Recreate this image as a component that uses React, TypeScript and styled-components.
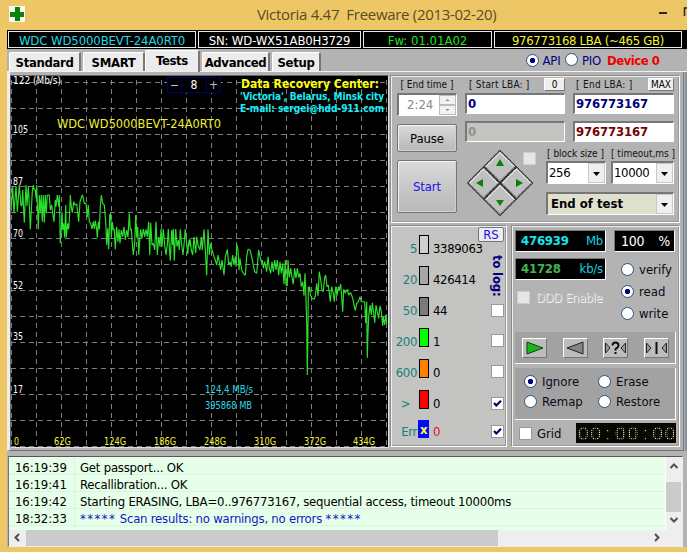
import React from "react";
import styled, { createGlobalStyle, css } from "styled-components";

const Global = createGlobalStyle`
  * { box-sizing: border-box; }
  body { margin: 0; background: #edc766; overflow: hidden; }
`;

const FONT = `"DejaVu Sans Condensed", "DejaVu Sans", sans-serif`;

const Window = styled.div`
  width: 687px;
  height: 552px;
  display: flex;
  flex-direction: column;
  background: #edc766;
  font-family: ${FONT};
  font-size: 13px;
  color: #000;
  white-space: pre;
  overflow: hidden;
`;

const TitleBar = styled.header`
  height: 30px;
  flex: none;
  display: flex;
  align-items: center;
  padding-left: 9px;
`;
const CrossIcon = styled.svg`
  width: 16px;
  height: 16px;
  margin-top: -2px;
`;
const Title = styled.h1`
  margin: -2px 0 0 232px;
  width: 403px;
  font: 400 15px/30px "Open Sans", sans-serif;
  letter-spacing: -0.3px;
  color: #5b4b22;
`;
const Controls = styled.svg`
  width: 28px;
  height: 30px;
  flex: none;
`;

const Body = styled.main`
  flex: none;
  height: 517px;
  margin-left: 7px;
  background: #b3b3b3;
  display: flex;
  flex-direction: column;
`;

const InfoBar = styled.div`
  height: 19px;
  flex: none;
  background: #000;
  display: flex;
  gap: 2px;
  padding: 1px 0 1px 1px;
`;
const InfoCell = styled.div<{ $w: number; $c: string; $ls?: number }>`
  width: ${(p) => p.$w}px;
  height: 17px;
  border: 1px solid #e8e8e8;
  color: ${(p) => p.$c};
  text-align: center;
  font-size: 13px;
  line-height: 17px;
  letter-spacing: ${(p) => p.$ls ?? 0}px;
`;

const TabRow = styled.nav`
  height: 23px;
  flex: none;
  display: flex;
  align-items: flex-end;
  border-bottom: 1px solid #f2f2f2;
  padding-left: 2px;
`;
const Tab = styled.div<{ $w: number; $active?: boolean; $gap?: number }>`
  width: ${(p) => p.$w}px;
  height: ${(p) => (p.$active ? 22 : 19)}px;
  margin-right: ${(p) => p.$gap ?? 2}px;
  margin-bottom: ${(p) => (p.$active ? -1 : 0)}px;
  background: #ececec;
  border: 1px solid #fff;
  border-right: 2px solid #777;
  border-bottom: 0;
  border-radius: 2px 2px 0 0;
  font-weight: bold;
  font-size: 13px;
  line-height: 19px;
  text-align: center;
  letter-spacing: -0.35px;
`;
const Mode = styled.div`
  display: flex;
  align-items: center;
  height: 22px;
  margin-left: auto;
  width: 161px;
  color: #000080;
  font-size: 13px;
  letter-spacing: -0.2px;
`;
const Device = styled.b`
  color: #f00000;
  margin-left: 6px;
  letter-spacing: -0.5px;
`;
const Dot = styled.span<{ $on?: boolean }>`
  flex: none;
  width: 13px;
  height: 13px;
  border-radius: 50%;
  border: 1px solid #27557f;
  background: ${(p) => (p.$on ? "radial-gradient(circle, #000080 0 2.4px, #fff 3px)" : "#fff")};
`;

const Page = styled.section`
  height: 379px;
  flex: none;
  width: 677px;
  display: flex;
  padding-top: 3px;
  border-left: 3px solid #eee;
  border-right: 1px solid #777;
  border-bottom: 1px solid #707070;
  box-shadow: 1px 0 #b3b3b3, 3px 0 #8292a2;
`;
const ChartBox = styled.div`
  width: 379px;
  height: 373px;
  border: 1px solid #666;
  border-right-color: #ddd;
  border-bottom-color: #ddd;
  background: #000;
  position: relative;
  svg { display: block; }
`;
const Spinner = styled.div`
  position: absolute;
  left: 156px;
  top: 1px;
  height: 16px;
  display: flex;
  background: #000;
  border: 1px solid #00006c;
  color: #fff;
  font-size: 12px;
  line-height: 15px;
  text-align: center;
`;
const SpinCell = styled.span<{ $w: number; $c?: string }>`
  width: ${(p) => p.$w}px;
  color: ${(p) => p.$c ?? "#fff"};
  & + & { border-left: 1px solid #00006c; }
`;

const Side = styled.div`
  display: flex;
  flex-direction: column;
  gap: 2px;
  margin-left: 1px;
  width: 290px;
`;
const groove = css`
  border: 1px solid #8b8b8b;
  border-right-color: #fff;
  border-bottom-color: #fff;
  box-shadow: inset 1px 1px #eee, inset -1px -1px #999;
`;
const TopGroup = styled.div`
  ${groove}
  height: 148px;
  display: flex;
  padding: 3px 0 0 6px;
  gap: 8px;
`;
const ColA = styled.div`
  width: 60px;
  display: flex;
  flex-direction: column;
`;
const Caption = styled.div<{ $w?: number; $ls?: number }>`
  width: ${(p) => (p.$w ? p.$w + "px" : "auto")};
  height: 13px;
  font-size: 10px;
  line-height: 12px;
  color: #111;
  text-align: center;
  letter-spacing: ${(p) => p.$ls ?? 0}px;
`;
const sunken = css`
  border: 1px solid #777;
  border-width: 2px 1px 1px 2px;
  border-right-color: #fff;
  border-bottom-color: #fff;
  background: #fff;
`;
const TimeBox = styled.div`
  ${sunken}
  margin-top: 1px;
  height: 23px;
  display: flex;
  justify-content: space-between;
  padding-left: 8px;
  color: #8a8a8a;
  font-size: 13px;
  line-height: 20px;
`;
const Steps = styled.svg`
  width: 18px;
  height: 20px;
`;
const Push = styled.button<{ $h: number; $mt: number; $c?: string }>`
  height: ${(p) => p.$h}px;
  margin: ${(p) => p.$mt}px 0 0;
  padding: 0;
  border: 1px solid #747474;
  border-radius: 2px;
  box-shadow: inset 1px 1px #f4f4f4, inset -1px -1px #d0d0d0;
  background: linear-gradient(#dcdcdc, #c6c6c6 55%, #bababa);
  color: ${(p) => p.$c ?? "#000"};
  font: 13px ${FONT};
  letter-spacing: -0.1px;
`;
const ColB = styled.div`
  display: flex;
  flex-direction: column;
  width: 209px;
`;
const Row = styled.div<{ $gap?: number; $mt?: number }>`
  display: flex;
  gap: ${(p) => p.$gap ?? 0}px;
  margin-top: ${(p) => p.$mt ?? 0}px;
`;
const HeadCell = styled.div<{ $w: number; $pl: number }>`
  width: ${(p) => p.$w}px;
  padding-left: ${(p) => p.$pl}px;
  display: flex;
  justify-content: space-between;
`;
const Mini = styled.div<{ $w: number }>`
  width: ${(p) => p.$w}px;
  height: 13px;
  margin-top: -1px;
  background: #efefef;
  border: 1px solid #fff;
  border-right-color: #777;
  border-bottom-color: #777;
  font-size: 10px;
  line-height: 12px;
  text-align: center;
`;
const Field = styled.div<{ $w: number; $c: string; $off?: boolean }>`
  ${sunken}
  width: ${(p) => p.$w}px;
  height: 21px;
  padding-left: 1px;
  font-weight: 700;
  font-size: 13px;
  line-height: 18px;
  letter-spacing: -0.15px;
  color: ${(p) => p.$c};
  ${(p) => p.$off && "background: #c3c3bf;"}
`;
const PadArea = styled.div`
  width: 82px;
  display: flex;
  align-items: flex-start;
  padding: 1px 0 0 1px;
`;
const Pad = styled.svg`
  width: 68px;
  height: 68px;
  flex: none;
`;
const Check = styled.span<{ $dim?: boolean; $ml?: number; $mt?: number }>`
  flex: none;
  display: flex;
  width: 13px;
  height: 13px;
  margin-left: ${(p) => p.$ml ?? 0}px;
  margin-top: ${(p) => p.$mt ?? 0}px;
  border: 1px solid ${(p) => (p.$dim ? "#ccc" : "#999")};
  background: ${(p) => (p.$dim ? "#e6e6e6" : "#fff")};
  svg { width: 11px; height: 11px; }
`;
const Selects = styled.div`
  width: 128px;
  display: flex;
  flex-direction: column;
`;
const Select = styled.div<{ $w: number; $big?: boolean }>`
  ${sunken}
  width: ${(p) => p.$w}px;
  height: 23px;
  display: flex;
  justify-content: space-between;
  padding-left: ${(p) => (p.$big ? 3 : 1)}px;
  font-size: 13px;
  font-weight: ${(p) => (p.$big ? 700 : 400)};
  letter-spacing: ${(p) => (p.$big ? 0 : -0.35)}px;
  line-height: 20px;
  ${(p) => p.$big && "background: #dfe0cd;"}
`;
const Drop = styled.svg`
  width: 17px;
  height: 20px;
  flex: none;
`;

const Lower = styled.div`
  display: flex;
  gap: 4px;
`;
const Legend = styled.div`
  ${groove}
  width: 117px;
  height: 222px;
  background: #c3c3c1;
  display: flex;
  justify-content: space-between;
  padding: 9px 2px 0 1px;
`;
const LegendRows = styled.div`
  display: flex;
  flex-direction: column;
`;
const LegendRow = styled.div<{ $last?: boolean }>`
  display: grid;
  flex: none;
  grid-template-columns: 25px 10px auto;
  column-gap: 2px;
  height: ${(p) => (p.$last ? 26 : 31)}px;
  margin-top: ${(p) => (p.$last ? -1 : 0)}px;
  font-size: 13px;
  line-height: ${(p) => (p.$last ? 24 : 28)}px;
  letter-spacing: -0.35px;
`;
const Key = styled.span`
  text-align: right;
  color: #16807f;
`;
const Swatch = styled.span<{ $c: string }>`
  height: 19px;
  border: 1px solid #000;
  background: ${(p) => p.$c};
`;
const ErrMark = styled.b`
  height: 18px;
  margin: 0 0 0 -1px;
  background: #0008ff;
  color: #ffff30;
  font-size: 13px;
  line-height: 20px;
  text-align: center;
`;
const Count = styled.span<{ $c?: string }>`
  padding-left: 2px;
  color: ${(p) => p.$c ?? "#000"};
  width: 52px;
`;
const LogCol = styled.div`
  display: flex;
  flex-direction: column;
  align-items: flex-end;
  margin-top: -8px;
  margin-left: -12px;
  width: 26px;
`;
const RS = styled.div`
  width: 26px;
  height: 15px;
  flex: none;
  border: 1px solid #777;
  border-radius: 2px;
  background: #ececf2;
  color: #1414e0;
  font-size: 13px;
  line-height: 14px;
  text-align: center;
`;
const ToLog = styled.div`
  writing-mode: vertical-rl;
  flex: none;
  width: 14px;
  height: 49px;
  margin-top: 13px;
  font-weight: bold;
  font-size: 13px;
  line-height: 14px;
  letter-spacing: -0.2px;
  color: #000080;
`;

const Panel = styled.div`
  ${groove}
  width: 169px;
  height: 222px;
  display: flex;
  flex-direction: column;
  padding: 4px 0 0 3px;
`;
const Upper = styled.div`
  display: flex;
  gap: 8px;
  height: 102px;
`;
const Stack = styled.div`
  display: flex;
  flex-direction: column;
`;
const Led = styled.div<{ $w: number; $mt?: number; $c: string }>`
  width: ${(p) => p.$w}px;
  height: 22px;
  margin-top: ${(p) => p.$mt ?? 0}px;
  border: 1px solid #777;
  border-right-color: #fff;
  border-bottom-color: #fff;
  background: #000;
  color: ${(p) => p.$c};
  display: flex;
  justify-content: space-between;
  padding: 0 2px 0 5px;
  font-size: 13px;
  line-height: 20px;
  letter-spacing: -0.2px;
`;
const Unit = styled.span`
  color: #19d0e0;
`;
const Percent = styled(Led)`
  font-size: 14px;
  line-height: 21px;
  padding: 0 4px 0 6px;
`;
const Option = styled.label<{ $ml?: number; $mt?: number; $gap?: number }>`
  display: flex;
  align-items: center;
  gap: ${(p) => p.$gap ?? 5}px;
  height: 20px;
  margin-left: ${(p) => p.$ml ?? 0}px;
  margin-top: ${(p) => p.$mt ?? 0}px;
  font-size: 13px;
  color: #0a0a14;
`;
const Disabled = styled.span`
  color: #bcbcbc;
  text-shadow: 1px 1px #f2f2f2;
  letter-spacing: -0.45px;
`;
const Strip = styled.div<{ $h: number; $mt?: number }>`
  width: 161px;
  height: ${(p) => p.$h}px;
  margin-top: ${(p) => p.$mt ?? 0}px;
  background: #a2a2a3;
  border-right: 1px solid #fff;
  border-bottom: 1px solid #fff;
`;
const Transport = styled(Strip)`
  display: flex;
  padding: 6px 6px 0 7px;
  justify-content: space-between;
`;
const Key3D = styled.svg`
  width: 25px;
  height: 20px;
  border: 1px solid #fff;
  border-right-color: #777;
  border-bottom-color: #777;
  background: #bdbdbd;
`;
const Actions = styled(Strip)`
  display: grid;
  grid-template-columns: 74px auto;
  grid-template-rows: 20px 20px;
  padding: 3px 0 0 9px;
`;
const Bottom = styled.div`
  display: flex;
  justify-content: space-between;
  width: 161px;
  padding: 3px 0 0 4px;
`;
const Timer = styled.div`
  width: 100px;
  height: 20px;
  display: flex;
  background-color: #0b0d04;
  color: #d5dfb4;
  font: 19px/21px "Liberation Sans", sans-serif;
  padding-left: 1px;
  position: relative;
  &::after {
    content: "";
    position: absolute;
    inset: 0;
    background:
      repeating-linear-gradient(90deg, rgba(4, 5, 0, 0.75) 0 1px, transparent 1px 2px),
      repeating-linear-gradient(rgba(4, 5, 0, 0.75) 0 1px, transparent 1px 2px);
  }
`;
const TimerCell = styled.span`
  flex: 1;
  text-align: center;
`;

const Log = styled.section`
  width: 675px;
  height: 91px;
  flex: none;
  margin: 5px 0 0 1px;
  border: 1px solid #eee;
  border-top: 1px solid #555;
  border-left: 1px solid #777;
  background: #eee;
  display: grid;
  grid-template-columns: 657px 16px;
  grid-template-rows: 73px 16px;
`;
const Lines = styled.div`
  background: #e6ffe9;
  border-right: 1px solid #fff;
  padding-top: 1px;
`;
const Line = styled.div<{ $c?: string }>`
  display: grid;
  grid-template-columns: 66px auto;
  height: 17px;
  border-bottom: 1px solid #dcf3df;
  font-size: 13px;
  line-height: 19px;
  color: ${(p) => p.$c ?? "#000"};
`;
const Time = styled.span`
  padding-left: 6px;
  border-right: 1px solid #dcf3df;
  color: #000;
  letter-spacing: -0.1px;
`;
const Message = styled.span`
  padding-left: 5px;
  letter-spacing: -0.22px;
`;
const Stars = styled.span`
  letter-spacing: 1.4px;
`;
const VScroll = styled.svg` width: 16px; height: 73px; `;
const HScroll = styled.svg` width: 657px; height: 16px; `;

/* Samples are in 1/3 px units, measured from the origin of each half. */
const firstHalf =
  "34,230 38,170 42,250 48,168 52,245 58,165 63,228 66,225 68,180 73,278 78,165 81,228 85,168 88,225 91,298 97,185 100,165 103,180 106,180 108,205 110,165 115,298 118,195 121,250 124,195 127,275 130,195 133,278 136,195 139,250 142,195 148,195 151,240 155,225 158,250 162,275 166,210 168,230 172,195 176,230 178,195 181,340 184,300 186,245 188,300 191,280 194,323 197,225 199,322 203,280 206,298 209,250 211,195 214,230 217,248 221,215 225,225 230,222 236,275 240,215 247,195 250,205 253,220 258,220 262,262 265,225 268,275 272,280 276,297 280,275 283,297 286,272 290,298 292,323 295,275 298,298 301,230 304,195 308,220 313,225 317,275 320,345 323,295 326,358 329,255 332,250 334,320 337,275 340,300 343,297 346,358 350,290 354,335 357,298 360,340 364,300 368,320 372,290 376,330 380,300 384,322 388,250 391,300 394,297 397,340 400,375 404,340 407,255 410,320 413,290 416,375 419,330 422,298 426,325 430,297 434,320 438,298 442,320 446,275 449,375 452,278 456,345 460,340 464,360 468,275 472,375 476,320 480,350 483,297 486,350 490,297 494,345 498,375 502,345 505,297 508,350 511,392 515,300 518,345 520,297 523,392 527,297 531,350 535,330 538,360 541,298 545,345 549,375 552,345 556,297 560,340 563,372 567,330 571,350";
const secondHalf =
  "0,145 4,180 8,195 12,140 17,190 20,140 24,165 30,180 34,140 37,180 42,118 46,180 50,256 54,118 58,195 62,160 66,180 72,200 76,210 80,225 84,195 88,215 92,240 96,210 102,256 106,200 112,178 116,225 120,215 124,230 128,195 132,225 136,200 138,230 140,162 144,180 147,240 150,205 155,240 160,250 166,256 170,200 174,178 180,180 186,205 190,225 194,245 200,250 206,180 210,200 214,215 217,210 220,235 224,215 230,245 234,200 238,235 242,250 246,215 250,245 254,210 258,240 262,210 266,256 270,215 274,250 278,220 282,283 286,210 288,285 292,287 294,210 298,262 302,235 306,262 310,283 314,235 318,265 322,235 326,262 330,250 334,290 338,275 342,317 345,250 347,300 350,400 352,555 354,400 355,290 356,300 359,290 361,315 366,325 372,328 376,318 380,280 384,318 388,245 392,270 396,300 400,305 404,262 407,255 411,290 415,285 418,310 421,335 425,290 430,310 433,335 437,290 441,318 445,290 448,300 452,282 455,320 458,365 461,298 466,310 472,298 476,315 482,308 488,325 492,345 496,362 500,340 505,335 510,320 514,335 520,335 524,335 527,400 530,335 532,503 534,430 536,380 540,345 544,375 547,338 550,360 554,398 558,345 562,365 566,385 570,348 574,365 578,408 580,380 584,405 587,375 590,400";

const project = (src: string, ox: number, oy: number) =>
  src
    .split(" ")
    .map((p) => {
      const [x, y] = p.split(",").map(Number);
      return `${(ox + x / 3).toFixed(1)},${(oy + y / 3).toFixed(1)}`;
    })
    .join(" ");

const trace = project(firstHalf, 0, 130) + " " + project(secondHalf, 190, 190);

const yLabels: [string, number][] = [
  ["122 (Mb/s)", 84], ["105", 133], ["87", 185], ["70", 237], ["52", 289], ["35", 340], ["17", 393],
];
const xLabels: [string, number, number][] = [
  ["0", 14, 5], ["62G", 54, 17], ["124G", 104, 22], ["186G", 154, 22],
  ["248G", 204, 22], ["310G", 254, 22], ["372G", 304, 22], ["434G", 353, 22],
];

const Chart = () => (
  <ChartBox>
    <svg width="377" height="371" viewBox="11 76 377 371" fontFamily={FONT}>
      <g stroke="#7d7d7d" strokeWidth="1" strokeDasharray="5 4" shapeRendering="crispEdges">
        {Array.from({ length: 16 }, (_, i) => (
          <line key={i} x1={11.5 + i * 25} x2={11.5 + i * 25} y1="80" y2="447" />
        ))}
        {Array.from({ length: 15 }, (_, i) => (
          <line key={i} x1="11" x2="388" y1={82.5 + i * 26} y2={82.5 + i * 26} />
        ))}
      </g>
      <polyline points={trace} fill="none" stroke="#2ee02e" strokeWidth="1.15" strokeLinejoin="bevel" />
      <g fill="#fff" fontSize="10">
        {yLabels.map(([t, y]) => (
          <text key={t} x="13" y={y} textLength={t.length > 3 ? 48 : t.length * 5} lengthAdjust="spacingAndGlyphs">{t}</text>
        ))}
      </g>
      <g fill="#f4f440" fontSize="10">
        {xLabels.map(([t, x, w]) => (
          <text key={t} x={x} y="445" textLength={w} lengthAdjust="spacingAndGlyphs">{t}</text>
        ))}
      </g>
      <text x="57" y="128" fill="#f0f030" fontSize="12.5" textLength="164" lengthAdjust="spacingAndGlyphs">WDC WD5000BEVT-24A0RT0</text>
      <g fill="#2fd9e6" fontSize="10">
        <text x="205" y="393" textLength="48" lengthAdjust="spacingAndGlyphs">124,4 MB/s</text>
        <text x="205" y="409" textLength="47" lengthAdjust="spacingAndGlyphs">395868 MB</text>
      </g>
      <text x="241" y="88" fill="#ffff10" fontSize="12" fontWeight="bold" textLength="138">Data Recovery Center:</text>
      <g fill="#19eef5" fontSize="10" fontWeight="bold">
        <text x="240" y="100" textLength="144">'Victoria', Belarus, Minsk city</text>
        <text x="240" y="112" textLength="144">E-mail: sergei@hdd-911.com</text>
      </g>
    </svg>
    <Spinner>
      <SpinCell $w={13} $c="#a9c4e4">−</SpinCell>
      <SpinCell $w={25}>8</SpinCell>
      <SpinCell $w={14} $c="#a9c4e4">+</SpinCell>
    </Spinner>
  </ChartBox>
);

const DropArrow = () => (
  <Drop viewBox="0 0 17 20">
    <rect x="0.5" y="0.5" width="16" height="19" fill="#efefef" stroke="#c8c8c8" />
    <path d="M5 9h7l-3.5 4z" fill="#000" />
  </Drop>
);

const Tick = ({ on, mt }: { on?: boolean; mt?: number }) => (
  <Check $mt={mt}>
    {on && (
      <svg viewBox="0 0 11 11">
        <path d="M2 5l2.3 2.5L9 2.8" fill="none" stroke="#000060" strokeWidth="2.2" />
      </svg>
    )}
  </Check>
);

const legend: [string, string, string][] = [
  ["5", "#cfcfcf", "3389063"],
  ["20", "#a6a6a6", "426414"],
  ["50", "#7b7b7b", "44"],
  ["200", "#00ff00", "1"],
  ["600", "#ff8000", "0"],
  [">  ", "#ff0000", "0"],
];

const DirectionPad = () => (
  <Pad viewBox="0 0 68 68">
    {[[34, 17.5], [17.5, 34], [50.5, 34], [34, 50.5]].map(([x, y]) => (
      <g key={`${x}-${y}`} transform={`translate(${x} ${y})`}>
        <path d="M0-16L16 0L0 16L-16 0Z" fill="#c0c0c0" stroke="#111" strokeWidth="1.2" strokeDasharray="1.5 .5" />
        <path d="M-14 0L0-14L14 0" fill="none" stroke="#f4f4f4" />
        <path d="M-14 .8L0 14L14 .8" fill="none" stroke="#888" />
      </g>
    ))}
    <g fill="#0a800a">
      <path d="M34 10l4 7h-8z" />
      <path d="M10 34l7-4v8z" />
      <path d="M57 34l-7-4v8z" />
      <path d="M34 57l4-6h-8z" />
    </g>
  </Pad>
);

const Group1 = () => (
  <TopGroup>
    <ColA>
      <Caption>[ End time ]</Caption>
      <TimeBox>
        2:24
        <Steps viewBox="0 0 18 20">
          <rect x="1.5" y=".5" width="16" height="9" fill="#f2f2f2" stroke="#bbb" />
          <rect x="1.5" y="10.5" width="16" height="9" fill="#f2f2f2" stroke="#bbb" />
          <path d="M7.5 6h4l-2-2zM7.5 14h4l-2 2z" fill="#888" />
        </Steps>
      </TimeBox>
      <Push $h={28} $mt={8}>Pause</Push>
      <Push $h={53} $mt={8} $c="#1c10ee">Start</Push>
    </ColA>
    <ColB>
      <Row $gap={8}>
        <HeadCell $w={100} $pl={4}><Caption $ls={0.2}>[ Start LBA: ]</Caption><Mini $w={21}>0</Mini></HeadCell>
        <HeadCell $w={101} $pl={3}><Caption $ls={0.3}>[ End LBA: ]</Caption><Mini $w={26}>MAX</Mini></HeadCell>
      </Row>
      <Row $gap={8} $mt={1}>
        <Field $w={100} $c="#000080">0</Field>
        <Field $w={101} $c="#000080">976773167</Field>
      </Row>
      <Row $gap={8} $mt={7}>
        <Field $w={100} $c="#909090" $off>0</Field>
        <Field $w={101} $c="#780000">976773167</Field>
      </Row>
      <Row $mt={6}>
        <PadArea>
          <DirectionPad />
          <Check $dim $ml={-11} $mt={3} />
        </PadArea>
        <Selects>
          <Row $gap={6}>
            <Caption $w={59}>[ block size ]</Caption>
            <Caption $w={63}>[ timeout,ms ]</Caption>
          </Row>
          <Row $gap={5}>
            <Select $w={60}>256<DropArrow /></Select>
            <Select $w={63}>10000<DropArrow /></Select>
          </Row>
          <Row $mt={8}>
            <Select $w={128} $big>End of test<DropArrow /></Select>
          </Row>
        </Selects>
      </Row>
    </ColB>
  </TopGroup>
);

const Group2 = () => (
  <Legend>
    <LegendRows>
      {legend.map(([k, c, v]) => (
        <LegendRow key={k}><Key>{k}</Key><Swatch $c={c} /><Count>{v}</Count></LegendRow>
      ))}
      <LegendRow $last><Key>Err</Key><ErrMark>x</ErrMark><Count $c="#e01030">0</Count></LegendRow>
    </LegendRows>
    <LogCol>
      <RS>RS</RS>
      <ToLog>to log:</ToLog>
      <Tick /><Tick mt={17} /><Tick mt={18} /><Tick on mt={19} /><Tick on mt={15} />
    </LogCol>
  </Legend>
);

const Group3 = () => (
  <Panel>
    <Upper>
      <Stack>
        <Led $w={91} $c="#19e5ee"><b>476939</b><Unit>Mb</Unit></Led>
        <Led $w={91} $mt={6} $c="#42b450"><b>41728</b><Unit>kb/s</Unit></Led>
        <Option $mt={7} $gap={6}><Check $dim $ml={2} /><Disabled>DDD Enable</Disabled></Option>
      </Stack>
      <Stack>
        <Percent $w={61} $c="#fff"><span>100</span><span>%</span></Percent>
        <Option $mt={7} $ml={7}><Dot />verify</Option>
        <Option $mt={2} $ml={7}><Dot $on />read</Option>
        <Option $mt={2} $ml={7}><Dot />write</Option>
      </Stack>
    </Upper>
    <Transport $h={32}>
      <Key3D viewBox="0 0 23 18"><path d="M4 3v12l16-6z" fill="#19b819" stroke="#123c12" /></Key3D>
      <Key3D viewBox="0 0 23 18"><path d="M19 3v12L3 9z" fill="#858585" stroke="#222" /></Key3D>
      <Key3D viewBox="0 0 23 18">
        <path d="M1.5 4v10L6 9zM21.5 4v10L17 9z" fill="#999" stroke="#222" />
        <path d="M8.5 6.5q0-3 3-3t3 3q0 1.5-3 3.500v1.500M11.500 13v2" fill="none" stroke="#111" strokeWidth="2" />
      </Key3D>
      <Key3D viewBox="0 0 23 18">
        <path d="M1.5 4v10L6 9zM21.5 4v10L17 9z" fill="#999" stroke="#222" />
        <path d="M11.5 3v12" stroke="#111" strokeWidth="2" />
      </Key3D>
    </Transport>
    <Actions $h={52} $mt={4}>
      <Option><Dot $on />Ignore</Option>
      <Option><Dot />Erase</Option>
      <Option><Dot />Remap</Option>
      <Option><Dot />Restore</Option>
    </Actions>
    <Bottom>
      <Option><Tick />Grid</Option>
      <Timer>{"00:00:00".split("").map((c, i) => <TimerCell key={i}>{c}</TimerCell>)}</Timer>
    </Bottom>
  </Panel>
);

export default function App() {
  return (
    <>
      <Global />
      <Window>
        <TitleBar>
          <CrossIcon viewBox="0 0 16 16">
            <rect width="16" height="16" fill="#f4faf0" />
            <path d="M6 1h5v5h4v5h-4v4H6v-4H1V6h5z" fill="#0c800c" />
          </CrossIcon>
          <Title>Victoria 4.47  Freeware (2013-02-20)</Title>
          <Controls viewBox="0 0 28 30">
            <path d="M0 13h8" stroke="#2a2416" strokeWidth="2" />
            <path d="M30 8H25.5V16" fill="none" stroke="#2a2416" strokeWidth="1.5" />
          </Controls>
        </TitleBar>
        <Body>
          <InfoBar>
            <InfoCell $w={188} $c="#27d7e2" $ls={-0.1}>WDC WD5000BEVT-24A0RT0</InfoCell>
            <InfoCell $w={163} $c="#fff" $ls={-0.15}>SN: WD-WX51AB0H3729</InfoCell>
            <InfoCell $w={129} $c="#20e020">Fw: 01.01A02</InfoCell>
            <InfoCell $w={188} $c="#f2f233" $ls={-0.3}>976773168 LBA (~465 GB)</InfoCell>
          </InfoBar>
          <TabRow>
            <Tab $w={72}>Standard</Tab>
            <Tab $w={62} $gap={0}>SMART</Tab>
            <Tab $w={55} $active>Tests</Tab>
            <Tab $w={68}>Advanced</Tab>
            <Tab $w={49}>Setup</Tab>
            <Mode>
              <Dot $on />
              <Row $gap={5}><span>{" API"}</span><Dot /></Row>
              <span>{" PIO"}</span>
              <Device>Device 0</Device>
            </Mode>
          </TabRow>
          <Page>
            <Chart />
            <Side>
              <Group1 />
              <Lower>
                <Group2 />
                <Group3 />
              </Lower>
            </Side>
          </Page>
          <Log>
            <Lines>
              <Line><Time>16:19:39</Time><Message>Get passport... OK</Message></Line>
              <Line><Time>16:19:41</Time><Message>Recallibration... OK</Message></Line>
              <Line><Time>16:19:42</Time><Message>Starting ERASING, LBA=0..976773167, sequential access, timeout 10000ms</Message></Line>
              <Line $c="#1414c8">
                <Time>18:32:33</Time>
                <Message><Stars>*****</Stars> Scan results: no warnings, no errors <Stars>*****</Stars></Message>
              </Line>
            </Lines>
            <VScroll viewBox="0 0 16 73">
              <rect y="25" width="15" height="30" fill="#cbcbcb" />
              <path d="M4.5 11L8 7.5L11.5 11M4.5 61L8 64.5L11.5 61" fill="none" stroke="#505050" strokeWidth="2" />
            </VScroll>
            <HScroll viewBox="0 0 657 16">
              <rect x="17" width="472" height="16" fill="#cbcbcb" />
              <path d="M10 4L6.5 7.5L10 11M646 4L649.5 7.5L646 11" fill="none" stroke="#505050" strokeWidth="2" />
            </HScroll>
          </Log>
        </Body>
      </Window>
    </>
  );
}
